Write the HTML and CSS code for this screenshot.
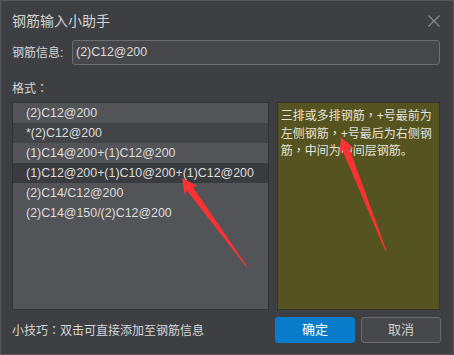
FILE: index.html
```html
<!DOCTYPE html>
<html lang="zh-CN">
<head>
<meta charset="utf-8">
<title>钢筋输入小助手</title>
<link rel="stylesheet" href="styles.css">
</head>
<body>
<div class="window">
  <div class="titlebar">
    <span class="title">钢筋输入小助手</span>
    <svg class="close" width="12" height="12" viewBox="0 0 12 12"><path d="M0.5 0.5L11.5 11.5M11.5 0.5L0.5 11.5" stroke="#8c8d90" stroke-width="1.1" fill="none"/></svg>
  </div>
  <div class="info-row">
    <span class="label">钢筋信息:</span>
    <div class="input">(2)C12@200</div>
  </div>
  <div class="fmt-label">格式<span class="punct" lang="zh-TW">：</span></div>
  <div class="panels">
    <ul class="list">
      <li class="row">(2)C12@200</li>
      <li class="row alt">*(2)C12@200</li>
      <li class="row">(1)C14@200+(1)C12@200</li>
      <li class="row sel">(1)C12@200+(1)C10@200+(1)C12@200</li>
      <li class="row">(2)C14/C12@200</li>
      <li class="row">(2)C14@150/(2)C12@200</li>
    </ul>
    <p class="desc">三排或多排钢筋<span class="punct" lang="zh-TW">，</span>+号最前为左侧钢筋<span class="punct" lang="zh-TW">，</span>+号最后为右侧钢筋<span class="punct" lang="zh-TW">，</span>中间为中间层钢筋。</p>
  </div>
  <div class="footer">
    <span class="tip">小技巧<span class="punct" lang="zh-TW">：</span>双击可直接添加至钢筋信息</span>
    <div class="buttons">
      <button class="btn primary">确定</button>
      <button class="btn">取消</button>
    </div>
  </div>
  <svg class="arrows" width="454" height="355" viewBox="0 0 454 355">
    <polygon fill="#fa3232" points="182,178 197.9,186.3 192.5,186.4 247.4,266.7 246.6,267.3 186.9,190.6 184.9,195.7"/>
    <polygon fill="#fa3232" points="341,137 354.3,149.0 349.1,147.8 386.5,250.8 385.5,251.2 342.5,150.4 339.5,154.8"/>
  </svg>
</div>
</body>
</html>
```

FILE: styles.css
```css
* { box-sizing: border-box; }
html, body { margin: 0; padding: 0; background: #3e3f42; }
body {
  font-family: "Liberation Sans", "Noto Sans CJK SC", sans-serif;
  font-size: 12px;
  color: #d6d6d6;
}
.punct { font-family: "Noto Sans CJK TC", sans-serif; }
.window {
  position: relative;
  width: 454px;
  height: 355px;
  border: 1px solid #56575a;
  background: #3e3f42;
  padding: 0 12px 0 11px;
  display: flex;
  flex-direction: column;
}
.titlebar {
  height: 39px;
  display: flex;
  align-items: center;
  justify-content: space-between;
  padding-right: 1px;
}
.title { font-size: 14px; color: #d2d2d2; line-height: 20px; }
.close { display: block; margin-top: 1px; }
.info-row {
  height: 25px;
  display: flex;
  align-items: center;
}
.label { width: 60px; line-height: 18px; padding-top: 1px; }
.input {
  flex: 1;
  height: 25px;
  margin-right: 1px;
  border: 1px solid #6c6d70;
  border-radius: 3px;
  background: #46474a;
  padding-left: 3px;
  line-height: 23px;
  font-size: 12.4px;
  color: #dcdcdc;
}
.fmt-label {
  margin-top: 13px;
  margin-bottom: 4px;
  height: 20px;
  line-height: 20px;
}
.panels {
  height: 208px;
  display: flex;
  gap: 8px;
}
.list {
  width: 258px;
  margin: 0;
  padding: 0;
  list-style: none;
  background: #535457;
  border: 1px solid #313235;
}
.row {
  height: 20px;
  line-height: 21px;
  padding-left: 13px;
  font-size: 12.4px;
  color: #dedede;
  white-space: nowrap;
}
.row.alt { background: #434447; }
.row.sel { background: #3a3b3e; }
.desc {
  width: 164px;
  margin: 0 1px 0 0;
  background: #555320;
  border: 1px solid #333430;
  padding: 4px 3px 0 3px;
  line-height: 16.5px;
  color: #e4e4dc;
}
.footer {
  margin-top: 7px;
  display: flex;
  align-items: center;
  justify-content: space-between;
}
.tip { line-height: 20px; }
.buttons { display: flex; gap: 6px; }
.btn {
  width: 80px;
  height: 26px;
  border: 1px solid #6a6b6e;
  border-radius: 3px;
  background: #47484b;
  color: #cfcfcf;
  font-family: "Liberation Sans", "Noto Sans CJK SC", sans-serif;
  font-size: 13px;
  padding: 0;
  line-height: 24px;
}
.btn.primary { background: #087bca; border-color: #087bca; color: #ffffff; }
.arrows {
  position: absolute;
  left: -1px;
  top: -1px;
  pointer-events: none;
}
```
